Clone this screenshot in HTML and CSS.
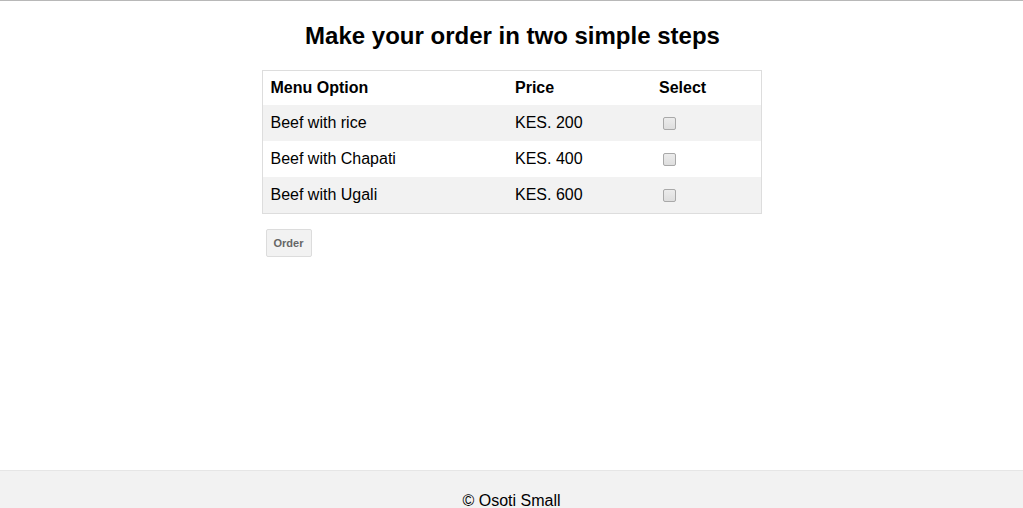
FILE: index.html
```html
<!DOCTYPE html>
<html>
<head>
<meta charset="utf-8">
<link rel="stylesheet" href="styles.css">
</head>
<body>
<div class="topline"></div>
<main class="page">
  <h1 class="title">Make your order in two simple steps</h1>
  <form class="order-form">
    <table class="menu">
      <thead>
        <tr><th class="c1">Menu Option</th><th class="c2">Price</th><th class="c3">Select</th></tr>
      </thead>
      <tbody>
        <tr class="odd"><td>Beef with rice</td><td>KES. 200</td><td><input type="checkbox" class="check"></td></tr>
        <tr><td>Beef with Chapati</td><td>KES. 400</td><td><input type="checkbox" class="check"></td></tr>
        <tr class="odd"><td>Beef with Ugali</td><td>KES. 600</td><td><input type="checkbox" class="check"></td></tr>
      </tbody>
    </table>
    <button type="button" class="btn">Order</button>
  </form>
</main>
<footer class="footer">© Osoti Small</footer>
</body>
</html>
```

FILE: styles.css
```css
html, body {
  margin: 0;
  padding: 0;
  background: #fff;
  font-family: "Liberation Sans", Arial, sans-serif;
  color: #000;
}
.topline {
  height: 1px;
  background: #b8b8b8;
}
.page {
  width: 500px;
  margin: 0 auto;
  min-height: 469px;
  box-sizing: border-box;
  padding-top: 21px;
}
.title {
  font-size: 24px;
  font-weight: bold;
  text-align: center;
  margin: 0 0 20px 2px;
  line-height: 28px;
}
.order-form {
  margin: 0;
}
.menu {
  width: 500px;
  table-layout: fixed;
  border-collapse: collapse;
  border: 1px solid #dddddd;
  font-size: 16px;
}
.menu th, .menu td {
  text-align: left;
  padding: 0 8px;
  height: 36px;
  line-height: 18px;
  vertical-align: middle;
}
.menu thead th {
  height: 34px;
  font-weight: bold;
}
.c1 { width: 228.5px; }
.c2 { width: 128px; }
.menu tr.odd {
  background: #f2f2f2;
}
.check {
  -webkit-appearance: none;
  appearance: none;
  display: inline-block;
  margin: 0 0 0 4px;
  width: 13px;
  height: 13px;
  box-sizing: border-box;
  border: 1px solid #a9a9a9;
  border-radius: 2px;
  background: linear-gradient(#ececec, #dedede);
  vertical-align: middle;
}
.btn {
  margin: 15px 0 0 4px;
  width: 46px;
  height: 28px;
  padding: 0;
  font-family: "Liberation Sans", Arial, sans-serif;
  font-size: 11px;
  font-weight: bold;
  color: #666;
  background: #f2f2f2;
  border: 1px solid #dcdcdc;
  border-radius: 2px;
}
.footer {
  background: #f2f2f2;
  border-top: 1px solid #e6e6e6;
  text-align: center;
  font-size: 16px;
  padding-top: 21px;
  height: 60px;
  box-sizing: border-box;
}
```
